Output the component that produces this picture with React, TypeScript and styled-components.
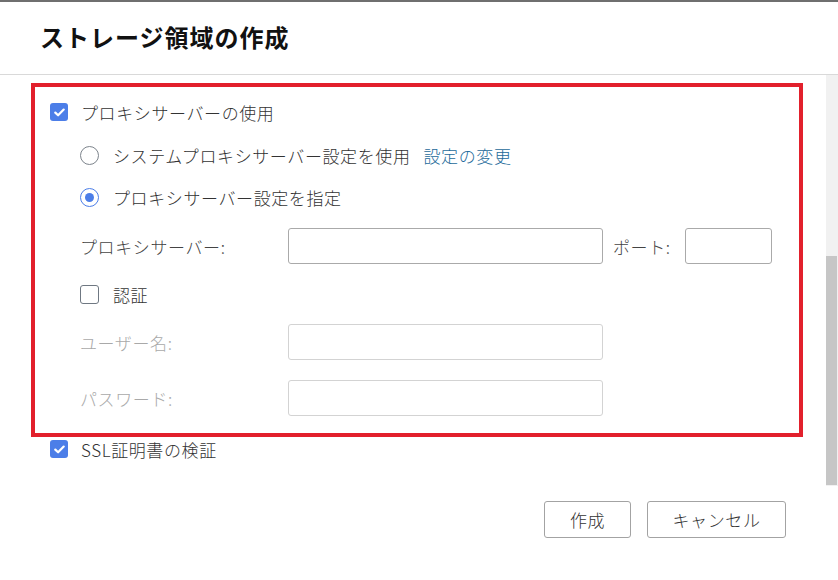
import React from 'react';
import styled, { createGlobalStyle } from 'styled-components';

const GlobalStyle = createGlobalStyle`
  html, body {
    margin: 0;
    padding: 0;
    background: #ffffff;
  }
  body {
    width: 838px;
    height: 580px;
    overflow: hidden;
    font-family: "Noto Sans CJK JP", "Noto Sans", sans-serif;
    color: #333333;
  }
`;

const Dialog = styled.div`
  width: 838px;
  height: 580px;
  display: flex;
  flex-direction: column;
  border-top: 2px solid #6f6f6f;
  box-sizing: border-box;
`;

const Header = styled.div`
  height: 73px;
  flex: none;
  display: flex;
  align-items: center;
  padding-left: 40px;
  border-bottom: 1px solid #d9d9d9;
  box-sizing: border-box;
`;

const Title = styled.h1`
  margin: 0;
  font-size: 24px;
  font-weight: 700;
  letter-spacing: 1px;
  color: #111111;
  line-height: 1;
  padding-bottom: 2px;
`;

const Body = styled.div`
  height: 411px;
  flex: none;
  display: flex;
`;

const Content = styled.div`
  flex: 1;
  padding: 8px 0 0 31px;
  box-sizing: border-box;
`;

const Scrollbar = styled.div`
  width: 12px;
  flex: none;
  background: #f1f1f1;
  display: flex;
  flex-direction: column;
`;

const Thumb = styled.div<{ $top: number; $size: number }>`
  margin-top: ${p => p.$top}px;
  height: ${p => p.$size}px;
  width: 11px;
  background: #c6c6c6;
`;

const Highlight = styled.section`
  width: 772px;
  border: 4px solid #e2202c;
  box-sizing: border-box;
  padding: 4px 0 17px 15px;
`;

const Row = styled.div<{ $h: number; $indent?: number; $mt?: number }>`
  height: ${p => p.$h}px;
  margin-top: ${p => p.$mt ?? 0}px;
  padding-left: ${p => p.$indent ?? 0}px;
  display: flex;
  align-items: center;
  font-size: 17px;
  font-weight: 300;
  letter-spacing: 0.6px;
  line-height: 1;
`;

const Check = styled.span<{ $checked?: boolean; $size: number }>`
  width: ${p => p.$size}px;
  height: ${p => p.$size}px;
  box-sizing: border-box;
  border-radius: 3px;
  flex: none;
  display: flex;
  align-items: center;
  justify-content: center;
  background: ${p => (p.$checked ? '#4c7ee8' : '#ffffff')};
  border: ${p => (p.$checked ? 'none' : '1.5px solid #6f7882')};
`;

const Radio = styled.span<{ $checked?: boolean }>`
  width: 19px;
  height: 19px;
  box-sizing: border-box;
  border-radius: 50%;
  flex: none;
  display: flex;
  align-items: center;
  justify-content: center;
  border: 1.5px solid ${p => (p.$checked ? '#4c7ee8' : '#7d848c')};
  &::after {
    content: '';
    display: ${p => (p.$checked ? 'block' : 'none')};
    width: 9px;
    height: 9px;
    border-radius: 50%;
    background: #4c7ee8;
  }
`;

const Label = styled.span<{ $gap: number }>`
  margin-left: ${p => p.$gap}px;
  color: #333333;
`;

const Link = styled.a`
  margin-left: 13px;
  color: #1d6a9a;
  text-decoration: none;
  cursor: pointer;
`;

const FieldLabel = styled.span<{ $w: number; $disabled?: boolean }>`
  width: ${p => p.$w}px;
  flex: none;
  color: ${p => (p.$disabled ? '#a9a9a9' : '#444444')};
`;

const Input = styled.input<{ $w: number; $disabled?: boolean }>`
  width: ${p => p.$w}px;
  height: 36px;
  box-sizing: border-box;
  border: 1px solid ${p => (p.$disabled ? '#d3d3d3' : '#aaaaaa')};
  border-radius: 3px;
  background: #ffffff;
  padding: 0 8px;
  font-size: 15px;
  font-family: inherit;
  outline: none;
`;

const PortLabel = styled.span`
  width: 72px;
  flex: none;
  margin-left: 10px;
  color: #444444;
`;

const Footer = styled.div`
  flex: 1;
  display: flex;
  justify-content: flex-end;
  align-items: flex-start;
  gap: 16px;
  padding: 15px 52px 0 0;
`;

const Button = styled.button<{ $w: number }>`
  width: ${p => p.$w}px;
  height: 37px;
  background: #ffffff;
  border: 1px solid #a3a3a3;
  border-radius: 3px;
  font-family: inherit;
  font-size: 17px;
  font-weight: 300;
  letter-spacing: 0.6px;
  color: #333333;
  line-height: 1;
  cursor: pointer;
`;

const Tick = () => (
  <svg width="11" height="9" viewBox="0 0 11 9">
    <polyline points="1.3,4.6 4.1,7.3 9.7,1.6" fill="none" stroke="#ffffff" strokeWidth="2.2" strokeLinecap="round" strokeLinejoin="round" />
  </svg>
);

export default function App() {
  return (
    <>
      <GlobalStyle />
      <Dialog>
        <Header>
          <Title>ストレージ領域の作成</Title>
        </Header>
        <Body>
          <Content>
            <Highlight>
              <Row $h={42}>
                <Check $checked $size={18}><Tick /></Check>
                <Label $gap={13}>プロキシサーバーの使用</Label>
              </Row>
              <Row $h={44} $indent={30}>
                <Radio />
                <Label $gap={14}>システムプロキシサーバー設定を使用</Label>
                <Link>設定の変更</Link>
              </Row>
              <Row $h={40} $indent={30}>
                <Radio $checked />
                <Label $gap={14}>プロキシサーバー設定を指定</Label>
              </Row>
              <Row $h={36} $mt={11} $indent={30}>
                <FieldLabel $w={208}>プロキシサーバー:</FieldLabel>
                <Input $w={315} />
                <PortLabel>ポート:</PortLabel>
                <Input $w={87} />
              </Row>
              <Row $h={60} $indent={30}>
                <Check $size={19} />
                <Label $gap={14}>認証</Label>
              </Row>
              <Row $h={36} $indent={30}>
                <FieldLabel $w={208} $disabled>ユーザー名:</FieldLabel>
                <Input $w={315} $disabled disabled />
              </Row>
              <Row $h={36} $mt={20} $indent={30}>
                <FieldLabel $w={208} $disabled>パスワード:</FieldLabel>
                <Input $w={315} $disabled disabled />
              </Row>
            </Highlight>
            <Row $h={24} $indent={19}>
              <Check $checked $size={18}><Tick /></Check>
              <Label $gap={13}>SSL証明書の検証</Label>
            </Row>
          </Content>
          <Scrollbar>
            <Thumb $top={181} $size={229} />
          </Scrollbar>
        </Body>
        <Footer>
          <Button $w={87}>作成</Button>
          <Button $w={139}>キャンセル</Button>
        </Footer>
      </Dialog>
    </>
  );
}
